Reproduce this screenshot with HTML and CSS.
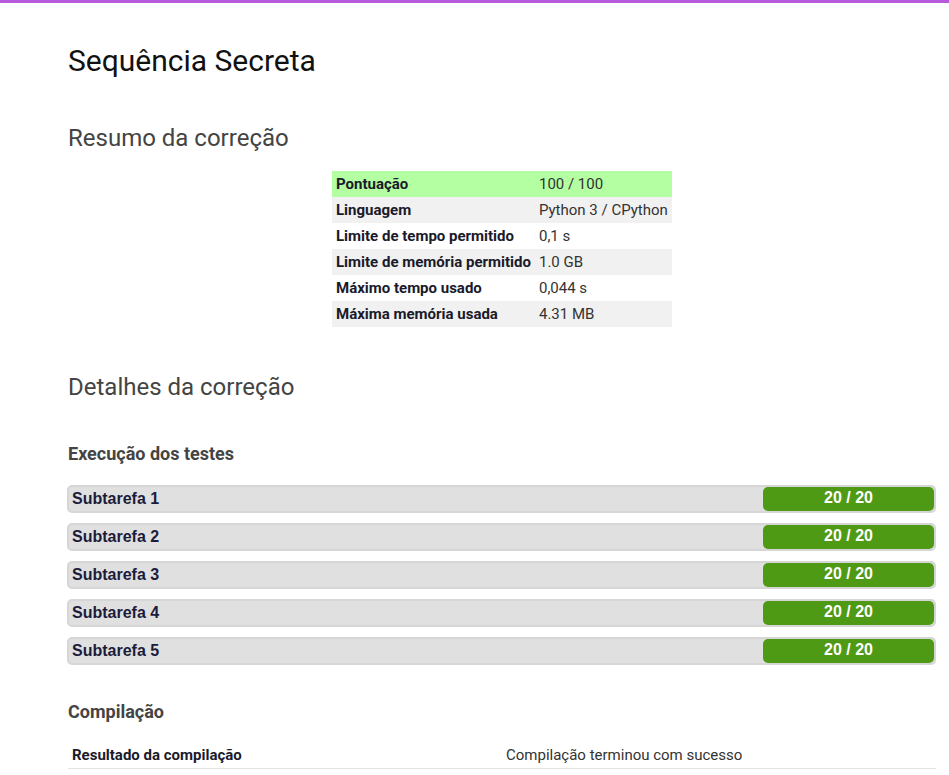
FILE: index.html
```html
<!DOCTYPE html>
<html lang="pt">
<head>
<meta charset="utf-8">
<title>Sequência Secreta</title>
<link rel="stylesheet" href="styles.css">
</head>
<body>
<div class="topbar"></div>
<main class="page">
  <h1 class="title">Sequência Secreta</h1>
  <h2 class="section">Resumo da correção</h2>
  <table class="summary">
    <tr class="ok"><th>Pontuação</th><td>100 / 100</td></tr>
    <tr><th>Linguagem</th><td>Python 3 / CPython</td></tr>
    <tr><th>Limite de tempo permitido</th><td>0,1 s</td></tr>
    <tr><th>Limite de memória permitido</th><td>1.0 GB</td></tr>
    <tr><th>Máximo tempo usado</th><td>0,044 s</td></tr>
    <tr><th>Máxima memória usada</th><td>4.31 MB</td></tr>
  </table>
  <h2 class="section details">Detalhes da correção</h2>
  <h3 class="sub">Execução dos testes</h3>
  <div class="tasks">
    <div class="task"><span class="task-name">Subtarefa 1</span><span class="score">20 / 20</span></div>
    <div class="task"><span class="task-name">Subtarefa 2</span><span class="score">20 / 20</span></div>
    <div class="task"><span class="task-name">Subtarefa 3</span><span class="score">20 / 20</span></div>
    <div class="task"><span class="task-name">Subtarefa 4</span><span class="score">20 / 20</span></div>
    <div class="task"><span class="task-name">Subtarefa 5</span><span class="score">20 / 20</span></div>
  </div>
  <h3 class="sub compile">Compilação</h3>
  <table class="compilation">
    <tr><th>Resultado da compilação</th><td>Compilação terminou com sucesso</td></tr>
  </table>
</main>
</body>
</html>
```
FILE: styles.css
```css
html, body {
  margin: 0;
  padding: 0;
  background: #fff;
}
body {
  font-family: Roboto, "Liberation Sans", sans-serif;
  color: #222;
}
.topbar {
  height: 3px;
  background: #b65bdc;
}
.page {
  padding: 0 13px 0 68px;
}
.title {
  margin: 0;
  padding-top: 38px;
  font-size: 30px;
  font-weight: 400;
  line-height: 40px;
  color: #111;
}
.section {
  margin: 0;
  font-size: 24px;
  font-weight: 400;
  line-height: 30px;
  color: #444;
}
.section:first-of-type {
  margin-top: 42px;
}
.summary {
  border-collapse: collapse;
  margin: 18px 0 0 264px;
  width: 339px;
  font-size: 15px;
}
.summary th, .summary td {
  height: 26px;
  padding: 0 4px;
  text-align: left;
  vertical-align: middle;
  white-space: nowrap;
}
.summary th {
  font-weight: 700;
  width: 195px;
  color: #1a1a2a;
}
.summary td {
  color: #333;
}
.summary tr:nth-child(even) {
  background: #f1f1f1;
}
.summary tr.ok {
  background: #b3ffa2;
}
.details {
  margin-top: 45px;
}
.sub {
  margin: 40px 0 0;
  font-size: 18px;
  font-weight: 700;
  line-height: 24px;
  color: #444;
}
.tasks {
  margin-top: 19px;
  display: flex;
  flex-direction: column;
  gap: 10px;
}
.task {
  display: flex;
  align-items: center;
  justify-content: space-between;
  height: 24px;
  margin-left: -1px;
  background: #e0e0e0;
  border: 2px solid #d6d6d6;
  border-radius: 5px;
  font-family: "Liberation Sans", Arial, sans-serif;
  font-weight: 700;
  font-size: 16px;
}
.task-name {
  padding-left: 3px;
  color: #1c1c3a;
}
.score {
  width: 171px;
  height: 24px;
  line-height: 22px;
  text-align: center;
  background: #4f9a14;
  color: #fff;
  border-radius: 5px;
  font-size: 16px;
}
.compile {
  margin-top: 35px;
}
.compilation {
  border-collapse: collapse;
  margin-top: 18px;
  width: 100%;
  font-size: 15px;
}
.compilation th, .compilation td {
  text-align: left;
  padding: 4px 4px 4px;
  border-bottom: 1px solid #e4e4e4;
}
.compilation th {
  width: 426px;
  font-weight: 700;
  color: #1a1a2a;
}
.compilation td {
  color: #333;
}
```
